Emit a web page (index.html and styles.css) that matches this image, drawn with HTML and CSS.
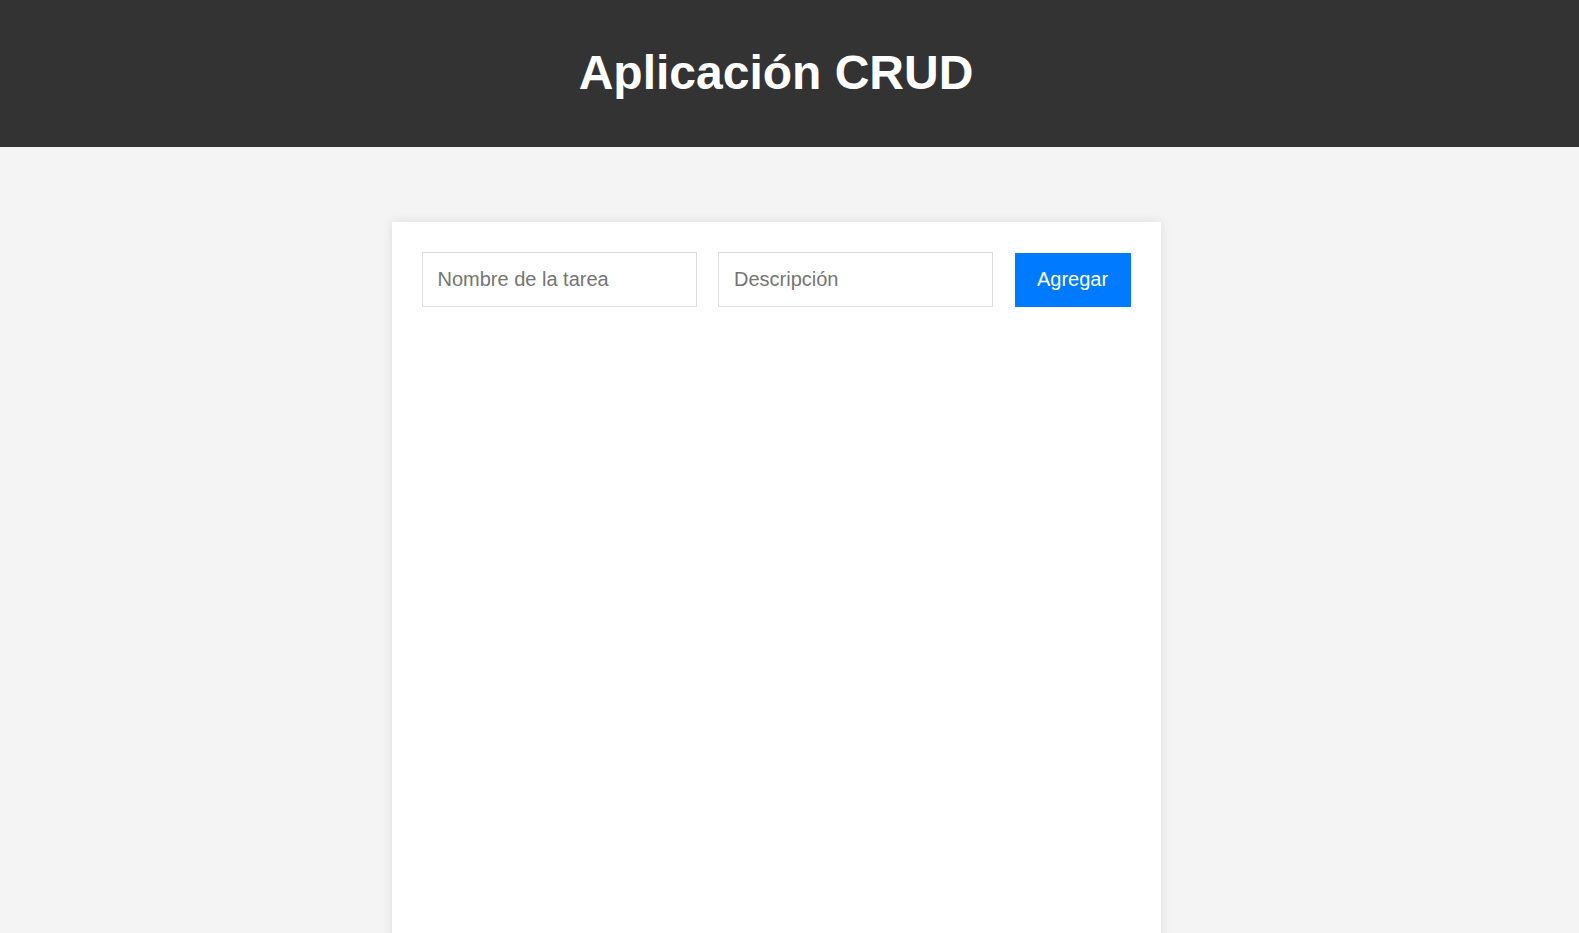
FILE: index.html
```html
<!DOCTYPE html>
<html lang="es">
<head>
<meta charset="utf-8">
<title>Aplicación CRUD</title>
<link rel="stylesheet" href="styles.css">
</head>
<body>
<header class="site-header">
  <h1 class="site-title">Aplicación CRUD</h1>
</header>
<main class="main">
  <section class="card">
    <form class="task-form" onsubmit="return false;">
      <input class="field" type="text" placeholder="Nombre de la tarea">
      <input class="field" type="text" placeholder="Descripción">
      <button class="btn-add" type="submit">Agregar</button>
    </form>
    <ul class="task-list"></ul>
  </section>
</main>
</body>
</html>
```
FILE: styles.css
```css
* { box-sizing: border-box; }
html, body { margin: 0; padding: 0; }
body {
  background: #f4f4f4;
  font-family: "Liberation Sans", Arial, sans-serif;
  color: #333;
  overflow: hidden;
}
.site-header {
  background: #333333;
  height: 147px;
  padding: 45px 0 0 0;
}
.site-title {
  margin: 0 27px 0 0;
  text-align: center;
  color: #ffffff;
  font-size: 48px;
  font-weight: bold;
  line-height: 55px;
}
.main {
  padding: 75px 27px 0 0;
  display: flex;
  justify-content: center;
}
.card {
  width: 769px;
  min-height: 900px;
  background: #ffffff;
  padding: 30px;
  box-shadow: 0 0 10px rgba(0, 0, 0, 0.1);
}
.task-form {
  display: flex;
  align-items: center;
  gap: 21.5px;
}
.field {
  flex: 1;
  min-width: 0;
  height: 55px;
  padding: 15px;
  border: 1px solid #dddddd;
  border-radius: 0;
  font-family: "Liberation Sans", Arial, sans-serif;
  font-size: 20px;
  color: #333;
  background: #fff;
  outline: none;
}
.field::placeholder { color: #757575; }
.btn-add {
  width: 116px;
  height: 54px;
  padding: 0;
  border: none;
  border-radius: 0;
  background: #007bff;
  color: #ffffff;
  font-family: "Liberation Sans", Arial, sans-serif;
  font-size: 20px;
  cursor: pointer;
}
.task-list { list-style: none; margin: 0; padding: 0; }
```
